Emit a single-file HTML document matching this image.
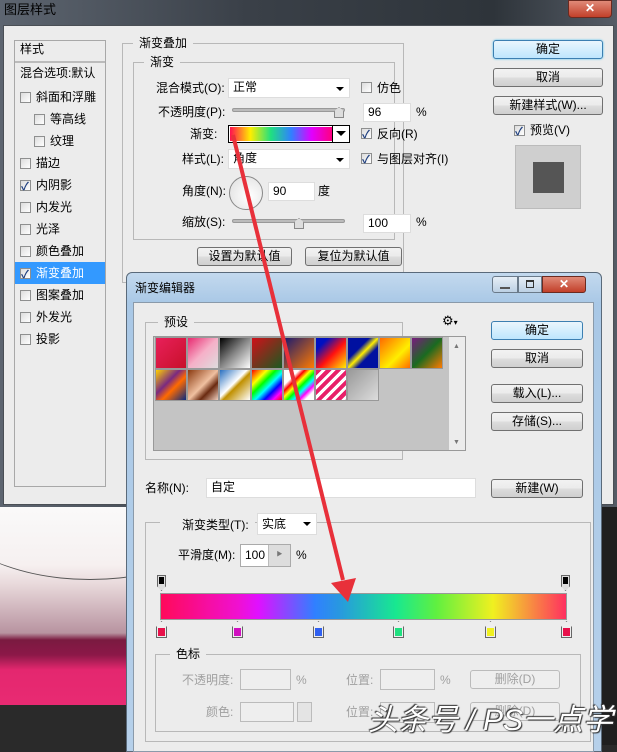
<!DOCTYPE html>
<html><head><meta charset="utf-8"><style>
*{box-sizing:border-box;margin:0;padding:0}
body{width:617px;height:745px;overflow:hidden;position:relative;background:#2a2a2a;font-family:"Liberation Sans","Noto Sans CJK SC",sans-serif;font-size:12px;color:#000}
.a{position:absolute}
.t{position:absolute;white-space:nowrap;line-height:14px}
.btn{position:absolute;border:1px solid #707070;border-radius:3px;background:linear-gradient(#f2f2f2,#ebebeb 50%,#dddddd 51%,#cfcfcf);text-align:center;line-height:16px;font-size:12px}
.inp{position:absolute;background:#fff;border:1px solid #ddd;padding-left:4px;line-height:17px}
.cb{position:absolute;width:11px;height:11px;border:1px solid #8e8f8f;background:linear-gradient(135deg,#dcdcdc,#fff)}
.cb.on::after{content:"✓";position:absolute;left:0;top:-3px;font-size:11px;color:#1f3f7f;font-weight:bold}
.grp{position:absolute;border:1px solid #b8b8b8}
.lg{position:absolute;background:#ececec;padding:0 6px;line-height:14px;top:-8px}
.dd::after{content:"";position:absolute;right:5px;top:8px;border:4px solid transparent;border-top:4px solid #000}
.sw{position:absolute;width:32px;height:32px;border:1px solid #999}
.dis{color:#a0a0a0}
</style></head><body>
<!-- background image lower-left -->
<div class="a" style="left:0;top:505px;width:130px;height:200px;background:linear-gradient(#fafafa 0,#f6f0f0 60px,#e8d8da 80px,#b893a0 128px,#7a1a40 135px,#8c1848 150px,#e4276f 165px,#e82a72 198px)"></div>
<div class="a" style="left:-60px;top:420px;width:300px;height:160px;border-radius:50%;border-bottom:1px solid #555;"></div>
<div class="a" style="left:598px;top:505px;width:19px;height:240px;background:#1f1f1f"></div>

<!-- outer dialog -->
<div class="a" style="left:0;top:0;width:617px;height:507px;background:linear-gradient(90deg,#5d6570,#3a4048 40%,#2e343a 80%,#555c66);"></div>
<div class="t" style="left:4px;top:3px;color:#000;font-size:13px">图层样式</div>
<div class="a" style="left:568px;top:0;width:44px;height:18px;border-radius:0 0 4px 4px;background:linear-gradient(#e08a78,#c2402a);border:1px solid #6b2a20;color:#fff;text-align:center;font-weight:bold;line-height:15px">✕</div>
<div class="a" style="left:3px;top:25px;width:611px;height:480px;background:#ececec;border:1px solid #4a4f55"></div>

<!-- left list -->
<div class="a" style="left:14px;top:40px;width:92px;height:447px;background:#ececec;border:1px solid #a8a8a8"></div>
<div class="a" style="left:15px;top:41px;width:90px;height:22px;background:#ececec;border-bottom:2px solid #bbb"></div>
<div class="t" style="left:20px;top:42px">样式</div>
<div class="t" style="left:20px;top:66px">混合选项:默认</div>
<div class="a" style="left:15px;top:262px;width:90px;height:22px;background:#3399ff"></div>
<div class="cb" style="left:20px;top:92px"></div><div class="t" style="left:36px;top:90px">斜面和浮雕</div>
<div class="cb" style="left:34px;top:114px"></div><div class="t" style="left:50px;top:112px">等高线</div>
<div class="cb" style="left:34px;top:136px"></div><div class="t" style="left:50px;top:134px">纹理</div>
<div class="cb" style="left:20px;top:158px"></div><div class="t" style="left:36px;top:156px">描边</div>
<div class="cb on" style="left:20px;top:180px"></div><div class="t" style="left:36px;top:178px">内阴影</div>
<div class="cb" style="left:20px;top:202px"></div><div class="t" style="left:36px;top:200px">内发光</div>
<div class="cb" style="left:20px;top:224px"></div><div class="t" style="left:36px;top:222px">光泽</div>
<div class="cb" style="left:20px;top:246px"></div><div class="t" style="left:36px;top:244px">颜色叠加</div>
<div class="cb on" style="left:20px;top:268px"></div><div class="t" style="left:36px;top:266px;color:#fff">渐变叠加</div>
<div class="cb" style="left:20px;top:290px"></div><div class="t" style="left:36px;top:288px">图案叠加</div>
<div class="cb" style="left:20px;top:312px"></div><div class="t" style="left:36px;top:310px">外发光</div>
<div class="cb" style="left:20px;top:334px"></div><div class="t" style="left:36px;top:332px">投影</div>

<!-- groups -->
<div class="grp" style="left:122px;top:43px;width:282px;height:240px"><div class="lg" style="left:10px">渐变叠加</div></div>
<div class="grp" style="left:133px;top:62px;width:262px;height:178px"><div class="lg" style="left:10px">渐变</div></div>
<div class="t" style="left:156px;top:81px">混合模式(O):</div>
<div class="inp dd" style="left:228px;top:78px;width:122px;height:20px">正常</div>
<div class="cb" style="left:361px;top:82px"></div><div class="t" style="left:377px;top:81px">仿色</div>
<div class="t" style="left:158px;top:105px">不透明度(P):</div>
<div class="a" style="left:232px;top:108px;width:113px;height:4px;background:#bbb;border:1px solid #999;border-radius:2px"></div>
<div class="a" style="left:334px;top:107px;width:10px;height:11px;background:#ddd;border:1px solid #888;clip-path:polygon(50% 0,100% 40%,100% 100%,0 100%,0 40%)"></div>
<div class="inp" style="left:363px;top:103px;width:48px;height:19px">96</div><div class="t" style="left:416px;top:105px">%</div>
<div class="t" style="left:190px;top:127px">渐变:</div>
<div class="a" style="left:228px;top:125px;width:122px;height:18px;border:1px solid #000;background:#fff"></div>
<div class="a" style="left:230px;top:127px;width:102px;height:14px;background:linear-gradient(90deg,#ff1050,#ffee00 20%,#20e080 40%,#3080ff 60%,#e000ff 80%,#ff0080)"></div>
<div class="a" style="left:332px;top:125px;width:1px;height:18px;background:#000"></div>
<div class="a" style="left:336px;top:131px;border:5px solid transparent;border-top:5px solid #000"></div>
<div class="cb on" style="left:361px;top:128px"></div><div class="t" style="left:377px;top:127px">反向(R)</div>
<div class="t" style="left:182px;top:152px">样式(L):</div>
<div class="inp dd" style="left:228px;top:149px;width:122px;height:20px">角度</div>
<div class="cb on" style="left:361px;top:153px"></div><div class="t" style="left:377px;top:152px">与图层对齐(I)</div>
<div class="t" style="left:182px;top:184px">角度(N):</div>
<div class="a" style="left:229px;top:176px;width:34px;height:34px;border-radius:50%;border:1px solid #888;background:radial-gradient(circle at 60% 60%,#fff,#ddd)"></div>
<div class="inp" style="left:268px;top:182px;width:47px;height:19px">90</div><div class="t" style="left:318px;top:184px">度</div>
<div class="t" style="left:182px;top:215px">缩放(S):</div>
<div class="a" style="left:232px;top:219px;width:113px;height:4px;background:#bbb;border:1px solid #999;border-radius:2px"></div>
<div class="a" style="left:294px;top:218px;width:10px;height:11px;background:#ddd;border:1px solid #888;clip-path:polygon(50% 0,100% 40%,100% 100%,0 100%,0 40%)"></div>
<div class="inp" style="left:363px;top:214px;width:48px;height:19px">100</div><div class="t" style="left:416px;top:215px">%</div>
<div class="btn" style="left:197px;top:247px;width:95px;height:19px">设置为默认值</div>
<div class="btn" style="left:305px;top:247px;width:97px;height:19px">复位为默认值</div>

<div class="btn" style="left:493px;top:40px;width:110px;height:19px;border:1px solid #3c7fb1;background:linear-gradient(#eaf6fd,#bee6fd);box-shadow:0 0 2px #4cc0f0">确定</div>
<div class="btn" style="left:493px;top:68px;width:110px;height:19px">取消</div>
<div class="btn" style="left:493px;top:96px;width:110px;height:19px">新建样式(W)...</div>
<div class="cb on" style="left:514px;top:125px"></div><div class="t" style="left:530px;top:123px">预览(V)</div>
<div class="a" style="left:515px;top:145px;width:66px;height:64px;background:#cfcfcf;border:1px solid #bbb"></div>
<div class="a" style="left:533px;top:162px;width:31px;height:31px;background:#555"></div>

<!-- gradient editor -->
<div class="a" style="left:126px;top:272px;width:476px;height:480px;border:1px solid #5a6a7a;border-radius:6px 6px 0 0;background:linear-gradient(#c3d9ee,#a9c8e6 30px,#b6d0ea)"></div>
<div class="t" style="left:135px;top:281px">渐变编辑器</div>
<div class="a" style="left:492px;top:276px;width:26px;height:17px;border:1px solid #6a7a8a;border-radius:3px 0 0 3px;background:linear-gradient(#e6eef6,#bcd0e4)"></div>
<div class="a" style="left:500px;top:287px;width:10px;height:2px;background:#555"></div>
<div class="a" style="left:518px;top:276px;width:24px;height:17px;border:1px solid #6a7a8a;background:linear-gradient(#e6eef6,#bcd0e4)"></div>
<div class="a" style="left:526px;top:280px;width:8px;height:8px;border:1px solid #333;border-top-width:2px"></div>
<div class="a" style="left:542px;top:276px;width:44px;height:17px;border:1px solid #6b2a20;border-radius:0 3px 3px 0;background:linear-gradient(#e08a78,#c2402a);color:#fff;text-align:center;font-weight:bold;line-height:15px">✕</div>
<div class="a" style="left:133px;top:302px;width:461px;height:450px;background:#ececec;border:1px solid #8a9aaa"></div>

<div class="grp" style="left:145px;top:322px;width:258px;height:138px"><div class="lg" style="left:12px">预设</div></div>
<div class="t" style="left:442px;top:314px;font-size:13px">⚙<span style="font-size:8px">▾</span></div>
<div class="a" style="left:153px;top:336px;width:313px;height:115px;background:#c4c4c4;border:1px solid #999"></div>
<div class="a" style="left:449px;top:337px;width:16px;height:113px;background:#ececec"></div>
<div class="t" style="left:453px;top:340px;font-size:7px;color:#777">▲</div>
<div class="t" style="left:453px;top:436px;font-size:7px;color:#777">▼</div>
<div class="sw" style="left:155px;top:337px;background:linear-gradient(135deg,#e8205a,#c8102a)"></div>
<div class="sw" style="left:187px;top:337px;background:linear-gradient(135deg,#e82a70,#f6b0c8 50%,#ddd)"></div>
<div class="sw" style="left:219px;top:337px;background:linear-gradient(135deg,#000,#888 50%,#fff)"></div>
<div class="sw" style="left:251px;top:337px;background:linear-gradient(135deg,#d0101a,#1a5a20)"></div>
<div class="sw" style="left:283px;top:337px;background:linear-gradient(135deg,#1a1a70,#ff7a00)"></div>
<div class="sw" style="left:315px;top:337px;background:linear-gradient(135deg,#0010c0 20%,#ff1010 55%,#ffee00)"></div>
<div class="sw" style="left:347px;top:337px;background:linear-gradient(135deg,#0010a0 35%,#ffee00 50%,#0010a0 65%)"></div>
<div class="sw" style="left:379px;top:337px;background:linear-gradient(135deg,#ff6a00,#ffee00 60%,#ff6a00)"></div>
<div class="sw" style="left:411px;top:337px;background:linear-gradient(135deg,#7a1a80,#1a6a20 50%,#ff7a00)"></div>
<div class="sw" style="left:155px;top:369px;background:linear-gradient(135deg,#ffd000,#7a2a80 40%,#ff6a00 60%,#0a2a80)"></div>
<div class="sw" style="left:187px;top:369px;background:linear-gradient(135deg,#8a3a10,#f0c0a0 50%,#6a2a10 70%,#f0d0c0)"></div>
<div class="sw" style="left:219px;top:369px;background:linear-gradient(135deg,#2a70c0,#fff 45%,#c09000 55%,#fff)"></div>
<div class="sw" style="left:251px;top:369px;background:linear-gradient(135deg,#f00,#ff0 25%,#0f0 40%,#0ff 55%,#00f 70%,#f0f 85%,#f00)"></div>
<div class="sw" style="left:283px;top:369px;background:linear-gradient(135deg,#fff 25%,#f00 35%,#ff0 45%,#0f0 55%,#0ff 65%,#f0f 75%,#fff 85%)"></div>
<div class="sw" style="left:315px;top:369px;background:repeating-linear-gradient(135deg,#e8206a 0 4px,#fff 4px 7px)"></div>
<div class="sw" style="left:347px;top:369px;background:linear-gradient(135deg,#999,#ddd)"></div>

<div class="btn" style="left:491px;top:321px;width:92px;height:19px;border:1px solid #3c7fb1;background:linear-gradient(#eaf6fd,#bee6fd)">确定</div>
<div class="btn" style="left:491px;top:349px;width:92px;height:19px">取消</div>
<div class="btn" style="left:491px;top:384px;width:92px;height:19px">载入(L)...</div>
<div class="btn" style="left:491px;top:412px;width:92px;height:19px">存储(S)...</div>
<div class="t" style="left:145px;top:481px">名称(N):</div>
<div class="inp" style="left:206px;top:478px;width:270px;height:20px">自定</div>
<div class="btn" style="left:491px;top:479px;width:92px;height:19px">新建(W)</div>

<div class="grp" style="left:145px;top:522px;width:446px;height:220px"></div>
<div class="a" style="left:160px;top:515px;width:95px;height:18px;background:#ececec"></div>
<div class="t" style="left:182px;top:518px">渐变类型(T):</div>
<div class="inp dd" style="left:257px;top:513px;width:60px;height:22px;line-height:20px">实底</div>
<div class="t" style="left:178px;top:548px">平滑度(M):</div>
<div class="inp" style="left:240px;top:544px;width:51px;height:23px;line-height:21px;border:1px solid #aaa">100</div>
<div class="a" style="left:268px;top:545px;width:22px;height:21px;background:#ddd;border-left:1px solid #bbb;font-size:6px;text-align:center;line-height:21px;color:#777">▶</div>
<div class="t" style="left:296px;top:548px">%</div>
<div class="a" style="left:157px;top:575px;width:9px;height:16px;background:#ddd;border:1px solid #666;clip-path:polygon(0 0,100% 0,100% 70%,50% 100%,0 70%)"></div>
<div class="a" style="left:159px;top:577px;width:5px;height:7px;background:#000"></div>
<div class="a" style="left:561px;top:575px;width:9px;height:16px;background:#ddd;border:1px solid #666;clip-path:polygon(0 0,100% 0,100% 70%,50% 100%,0 70%)"></div>
<div class="a" style="left:563px;top:577px;width:5px;height:7px;background:#000"></div>
<div class="a" style="left:160px;top:593px;width:407px;height:27px;border:1px solid #999;background:linear-gradient(90deg,#ff0a5a,#f010d0 19%,#e010ff 24%,#3080ff 38%,#2898e0 44%,#18e890 58%,#60f040 68%,#f0f020 82%,#ff3060 100%)"></div>
<div class="a" style="left:156px;top:621px;width:11px;height:17px;background:#eee;border:1px solid #666;clip-path:polygon(50% 0,100% 35%,100% 100%,0 100%,0 35%)"></div><div class="a" style="left:158px;top:628px;width:7px;height:8px;background:#e8104a"></div>
<div class="a" style="left:232px;top:621px;width:11px;height:17px;background:#eee;border:1px solid #666;clip-path:polygon(50% 0,100% 35%,100% 100%,0 100%,0 35%)"></div><div class="a" style="left:234px;top:628px;width:7px;height:8px;background:#d010c0"></div>
<div class="a" style="left:313px;top:621px;width:11px;height:17px;background:#eee;border:1px solid #666;clip-path:polygon(50% 0,100% 35%,100% 100%,0 100%,0 35%)"></div><div class="a" style="left:315px;top:628px;width:7px;height:8px;background:#3060f0"></div>
<div class="a" style="left:393px;top:621px;width:11px;height:17px;background:#eee;border:1px solid #666;clip-path:polygon(50% 0,100% 35%,100% 100%,0 100%,0 35%)"></div><div class="a" style="left:395px;top:628px;width:7px;height:8px;background:#20e080"></div>
<div class="a" style="left:485px;top:621px;width:11px;height:17px;background:#eee;border:1px solid #666;clip-path:polygon(50% 0,100% 35%,100% 100%,0 100%,0 35%)"></div><div class="a" style="left:487px;top:628px;width:7px;height:8px;background:#f0f020"></div>
<div class="a" style="left:561px;top:621px;width:11px;height:17px;background:#eee;border:1px solid #666;clip-path:polygon(50% 0,100% 35%,100% 100%,0 100%,0 35%)"></div><div class="a" style="left:563px;top:628px;width:7px;height:8px;background:#e8104a"></div>

<div class="grp" style="left:155px;top:654px;width:426px;height:78px"><div class="lg" style="left:14px">色标</div></div>
<div class="t dis" style="left:182px;top:673px">不透明度:</div>
<div class="a" style="left:240px;top:669px;width:51px;height:21px;border:1px solid #bbb;background:#eee"></div>
<div class="t dis" style="left:296px;top:673px">%</div>
<div class="t dis" style="left:346px;top:673px">位置:</div>
<div class="a" style="left:380px;top:669px;width:55px;height:21px;border:1px solid #bbb;background:#eee"></div>
<div class="t dis" style="left:440px;top:673px">%</div>
<div class="btn dis" style="left:470px;top:670px;width:90px;height:19px;border-color:#bbb;background:#eee">删除(D)</div>
<div class="t dis" style="left:206px;top:705px">颜色:</div>
<div class="a" style="left:240px;top:702px;width:54px;height:20px;border:1px solid #bbb;background:#eee"></div>
<div class="a" style="left:297px;top:702px;width:15px;height:20px;border:1px solid #bbb;background:#e4e4e4"></div>
<div class="t dis" style="left:346px;top:705px">位置:</div>
<div class="a" style="left:380px;top:702px;width:55px;height:21px;border:1px solid #bbb;background:#eee"></div>
<div class="btn dis" style="left:470px;top:702px;width:90px;height:19px;border-color:#bbb;background:#eee">删除(D)</div>

<svg class="a" style="left:0;top:0" width="617" height="745">
<line x1="233" y1="135" x2="343" y2="580" stroke="#e8303a" stroke-width="4"/>
<polygon points="331,583 348,602 356,578" fill="#e8303a"/>
</svg>
<div class="t" style="left:368px;top:704px;font-size:30px;line-height:34px;color:#fff;text-shadow:0 0 1px #333,1px 1px 1px #333,-1px -1px 1px #333;font-style:italic">头条号 / PS一点学</div>
</body></html>
